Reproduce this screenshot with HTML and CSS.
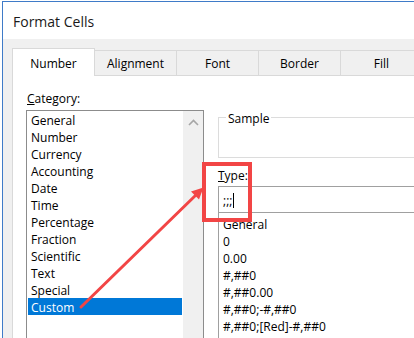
FILE: index.html
```html
<!DOCTYPE html>
<html>
<head>
<meta charset="utf-8">
<link rel="stylesheet" href="styles.css">
</head>
<body>
<div class="window">
  <div class="titlebar">Format Cells</div>
  <div class="dlg">
    <div class="tabs">
      <div class="tab active">Number</div>
      <div class="tab">Alignment</div>
      <div class="tab">Font</div>
      <div class="tab">Border</div>
      <div class="tab">Fill</div>
    </div>
    <div class="panel">
      <div class="leftcol">
        <div class="label"><u>C</u>ategory:</div>
        <div class="listbox">
          <ul class="items">
            <li>General</li>
            <li>Number</li>
            <li>Currency</li>
            <li>Accounting</li>
            <li>Date</li>
            <li>Time</li>
            <li>Percentage</li>
            <li>Fraction</li>
            <li>Scientific</li>
            <li>Text</li>
            <li>Special</li>
            <li class="sel">Custom</li>
          </ul>
          <div class="scrollbar">
            <svg width="11" height="7" viewBox="0 0 11 7"><path d="M1 6 L5.5 1.5 L10 6" fill="none" stroke="#a6a6a6" stroke-width="1.6"/></svg>
          </div>
        </div>
      </div>
      <div class="rightcol">
        <fieldset class="sample"><legend>Sample</legend></fieldset>
        <div class="label type-label"><u>T</u>ype:</div>
        <div class="typebox">;;;<span class="caret"></span></div>
        <ul class="typelist">
          <li>General</li>
          <li>0</li>
          <li>0.00</li>
          <li>#,##0</li>
          <li>#,##0.00</li>
          <li>#,##0;-#,##0</li>
          <li>#,##0;[Red]-#,##0</li>
        </ul>
      </div>
    </div>
  </div>
</div>
<svg class="annot" width="414" height="338" viewBox="0 0 414 338">
  <rect x="204" y="164" width="46" height="56" fill="none" stroke="#f24545" stroke-width="4"/>
  <line x1="81" y1="307" x2="197" y2="194" stroke="#f24545" stroke-width="3" stroke-linecap="round"/>
  <polygon points="203.5,187.5 199,199.5 191,191.5" fill="#f24545"/>
</svg>
</body>
</html>
```

FILE: styles.css
```css
html, body {
  margin: 0;
  padding: 0;
  background: #ffffff;
  overflow: hidden;
  width: 414px;
  height: 338px;
}
body {
  font-family: "Segoe UI", "Open Sans", "Noto Sans", sans-serif;
  color: #000;
  position: relative;
}
.window {
  margin: 1px 0 0 2px;
  border-top: 1px solid #3f7bc8;
  border-left: 1px solid #3f7bc8;
  height: 336px;
  width: 411px;
  overflow: hidden;
}
.titlebar {
  box-sizing: border-box;
  height: 37px;
  line-height: 37px;
  padding: 1px 0 0 10px;
  font-size: 14px;
  background: #fff;
  color: #1a1a1a;
}
.dlg {
  background: #f0f0f0;
  padding: 9px 0 0 9px;
  height: 300px;
}
.tabs {
  display: flex;
  align-items: flex-start;
  height: 28px;
}
.tab {
  flex: none;
  box-sizing: border-box;
  width: 82px;
  height: 26px;
  margin-top: 2px;
  padding-top: 2px;
  border-top: 1px solid #d9d9d9;
  border-right: 1px solid #d9d9d9;
  border-bottom: 1px solid #d9d9d9;
  font-size: 12px;
  line-height: 22px;
  text-align: center;
  background: #f0f0f0;
}
.tab.active {
  width: 83px;
  height: 28px;
  margin-top: 0;
  padding-top: 2px;
  border: 1px solid #d9d9d9;
  border-bottom: none;
  background: #fff;
  line-height: 25px;
}
.panel {
  display: flex;
  background: #fff;
  border-left: 1px solid #d9d9d9;
  padding: 14px 0 0 13px;
  height: 280px;
  overflow: hidden;
}
.label {
  font-size: 12px;
  height: 16px;
  line-height: 16px;
  padding-left: 1px;
  position: relative;
  top: 1px;
}
.leftcol {
  width: 178px;
  flex: none;
}
.listbox {
  margin-top: 4px;
  display: flex;
  border: 1px solid #8c8c8c;
  height: 240px;
}
.items {
  list-style: none;
  margin: 0;
  padding: 0 1px;
  width: 154px;
}
.items li, .typelist li {
  box-sizing: border-box;
  height: 17px;
  line-height: 15px;
  padding-top: 2px;
  font-size: 12px;
  padding-left: 3px;
  white-space: nowrap;
}
.items li.sel {
  background: #0078d7;
  color: #fff;
}
.scrollbar {
  width: 20px;
  background: #f0f0f0;
  display: flex;
  justify-content: center;
  padding-top: 8px;
  box-sizing: border-box;
}
.scrollbar svg { display: block; }
.rightcol {
  margin-left: 14px;
  width: 230px;
  flex: none;
}
.sample {
  margin: 19px 0 0 0;
  padding: 0;
  border: 1px solid #dcdcdc;
  height: 49px;
  box-sizing: border-box;
  font-size: 12px;
}
.sample legend {
  margin-left: 7px;
  padding: 0 2px;
  line-height: 16px;
  height: 16px;
  position: relative;
  top: 2px;
}
.type-label {
  margin-top: 9px;
  padding-left: 0;
}
.typebox {
  margin-top: 3px;
  box-sizing: border-box;
  height: 26px;
  border: 1px solid #a0a0a0;
  border-bottom: none;
  padding: 2px 0 0 4px;
  font-size: 12px;
  line-height: 22px;
  display: flex;
  align-items: center;
}
.caret {
  display: inline-block;
  width: 1px;
  height: 15px;
  background: #000;
  margin-left: 1px;
}
.typelist {
  list-style: none;
  margin: 0;
  padding: 2px 0 0 1px;
  border-top: 1px solid #a0a0a0;
  border-left: 1px solid #a0a0a0;
  height: 140px;
}
.annot {
  position: absolute;
  left: 0;
  top: 0;
  pointer-events: none;
}
```
